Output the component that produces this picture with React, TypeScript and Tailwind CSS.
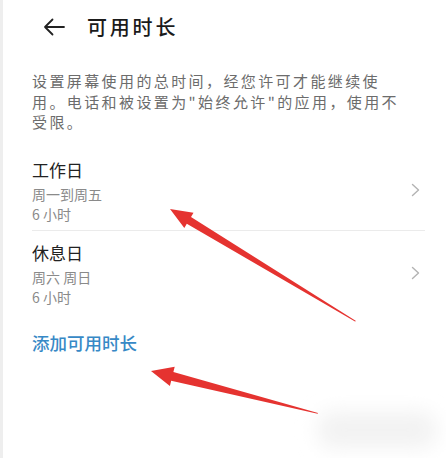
import React from 'react';

const rows = [
  { id: 1, title: '工作日', days: '周一到周五', hours: '6 小时' },
  { id: 2, title: '休息日', days: '周六 周日', hours: '6 小时' },
];

function Chevron() {
  return (
    <svg width="9" height="14" viewBox="0 0 9 14" fill="none">
      <path d="M1.5 1.5 L7.5 7 L1.5 12.5" stroke="#b3b3b3" strokeWidth="1.4" strokeLinecap="round" strokeLinejoin="round" />
    </svg>
  );
}

function BackArrow() {
  return (
    <svg width="22" height="18" viewBox="0 0 22 18" fill="none">
      <path d="M21 9 H2 M9.5 1.5 L2 9 L9.5 16.5" stroke="#222" strokeWidth="1.8" strokeLinecap="round" strokeLinejoin="round" />
    </svg>
  );
}

function Annotations() {
  return (
    <svg className="absolute inset-0 pointer-events-none" width="446" height="458" viewBox="0 0 446 458">
      <defs>
        <filter id="soft" x="-50%" y="-50%" width="200%" height="200%">
          <feGaussianBlur stdDeviation="10" />
        </filter>
      </defs>
      <rect x="318" y="412" width="118" height="36" rx="14" fill="#f2f2f2" filter="url(#soft)" />
      <polygon
        points="170,209 193.5,212.7 191,217 356,321 355,321.6 186.8,223.8 184.3,228.1"
        fill="#e53330"
      />
      <polygon
        points="151,371 174.7,366.7 173.4,372 318,413 317.6,413.8 171.2,380.8 169.9,386.1"
        fill="#e53330"
      />
    </svg>
  );
}

export default function App() {
  return (
    <div
      className="relative w-[446px] h-[458px] bg-white flex overflow-hidden"
      style={{ fontFamily: '"Noto Sans CJK SC", "Noto Sans", sans-serif' }}
    >
      <div className="w-[3px] bg-[#eeeeee]" />
      <div className="flex-1 pl-[29px] pr-[21px]">
        <div className="h-[54px] flex items-center">
          <div className="ml-[11px] mt-[-1px]">
            <BackArrow />
          </div>
          <h1 className="ml-[22px] text-[20px] leading-[24px] tracking-[2.8px] font-medium text-[#1b1b1b]">可用时长</h1>
        </div>

        <div className="mt-[17px] text-[15px] leading-[20.5px] tracking-[2.4px] text-[#6c6c6c] whitespace-nowrap">
          <div>设置屏幕使用的总时间，经您许可才能继续使</div>
          <div>用。电话和被设置为"始终允许"的应用，使用不</div>
          <div>受限。</div>
        </div>

        <div className="mt-[26px]">
          {rows.map((row, i) => (
            <div
              key={row.id}
              className={
                i === 0
                  ? 'flex items-center justify-between pb-[6px] border-b border-[#ebebeb]'
                  : 'flex items-center justify-between pt-[11px]'
              }
            >
              <div>
                <div className="text-[17px] leading-[22px] text-[#222]">{row.title}</div>
                <div className="mt-[3px] text-[14px] leading-[20px] text-[#8a8a8a]">{row.days}</div>
                <div className="text-[14px] leading-[20px] text-[#8a8a8a]">{row.hours}</div>
              </div>
              <div className="pr-[5px] mt-[-3px]">
                <Chevron />
              </div>
            </div>
          ))}
        </div>

        <div className="mt-[24px] text-[17.5px] leading-[24px] font-medium text-[#3789c6]">添加可用时长</div>
      </div>
      <Annotations />
    </div>
  );
}
